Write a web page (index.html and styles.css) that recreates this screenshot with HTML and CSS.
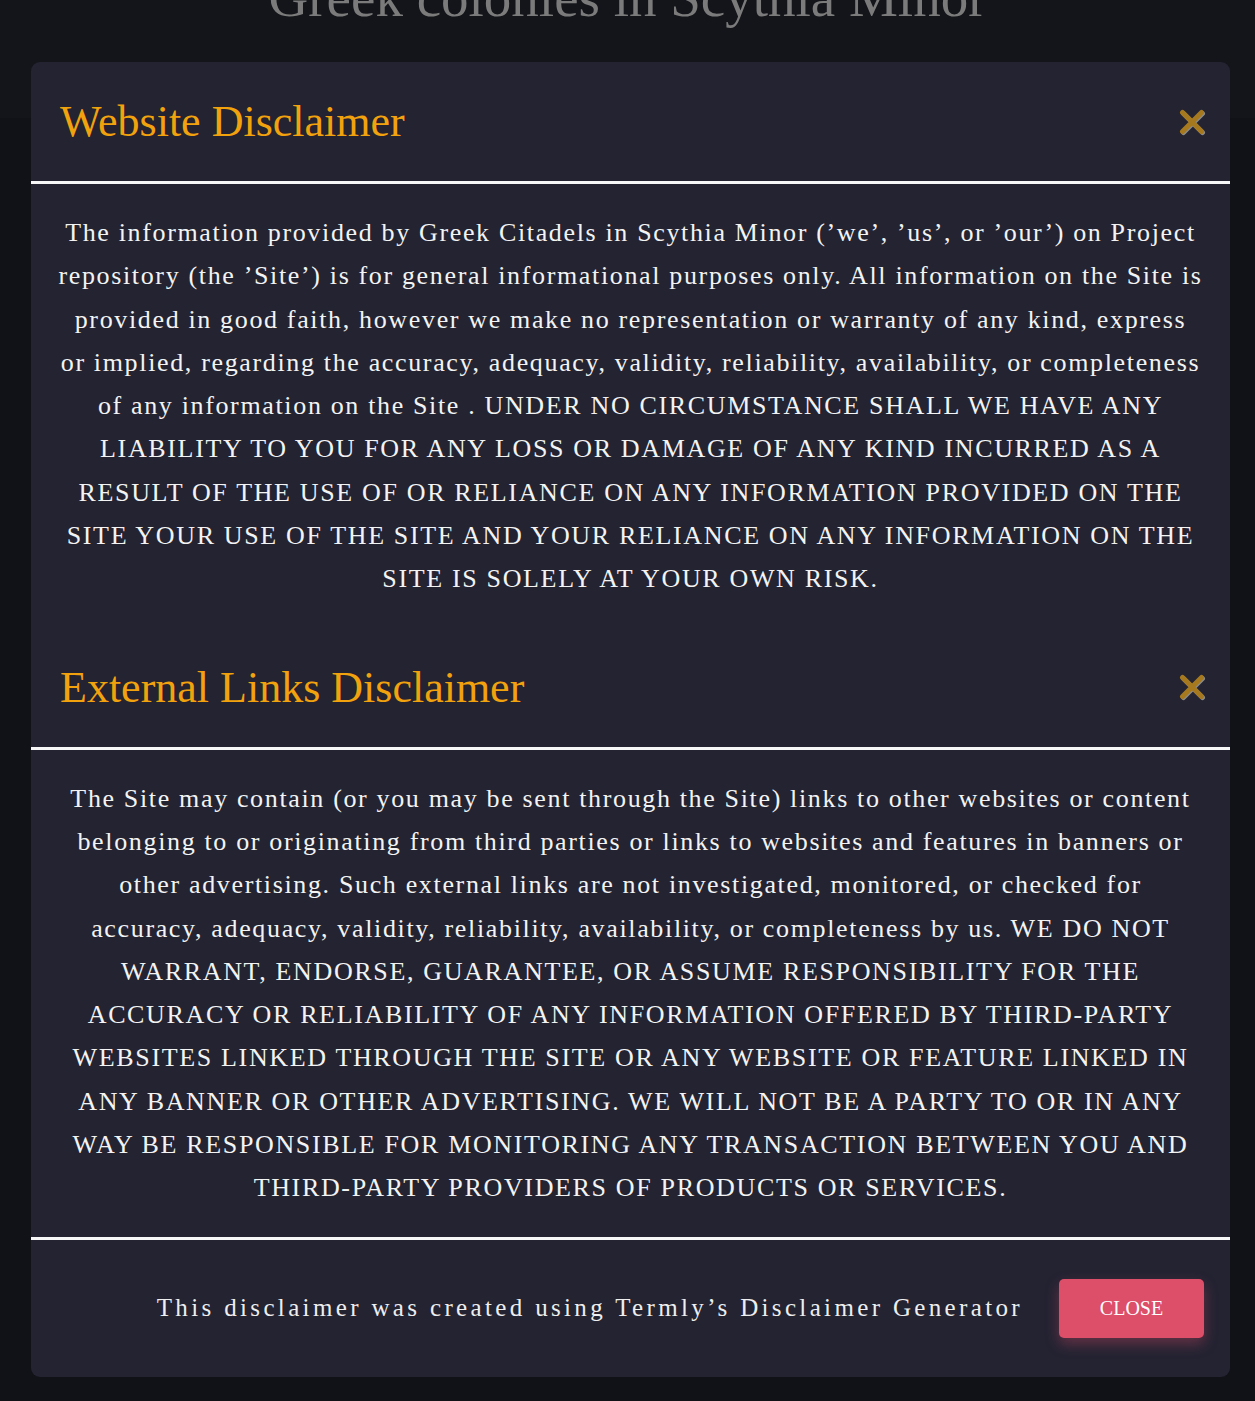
FILE: index.html
```html
<!DOCTYPE html>
<html lang="en">
<head>
<meta charset="utf-8">
<title>Greek colonies in Scythia Minor</title>
<link rel="stylesheet" href="styles.css">
</head>
<body>
<header class="site-header">
  <h1 class="site-title">Greek colonies in Scythia Minor</h1>
</header>
<div class="overlay">
  <div class="modal">
    <div class="modal-head">
      <h2 class="modal-title">Website Disclaimer</h2>
      <button class="x-btn" aria-label="Close">
        <svg width="26" height="26" viewBox="0 0 26 26"><path d="M3.5 3.5 L22.5 22.5 M22.5 3.5 L3.5 22.5" stroke="#a6791f" stroke-width="5" stroke-linecap="round" fill="none"/></svg>
      </button>
    </div>
    <div class="rule"></div>
    <div class="modal-body">
      <p class="disclaimer">The information provided by Greek Citadels in Scythia Minor (’we’, ’us’, or ’our’) on Project<br>
repository (the ’Site’) is for general informational purposes only. All information on the Site is<br>
provided in good faith, however we make no representation or warranty of any kind, express<br>
or implied, regarding the accuracy, adequacy, validity, reliability, availability, or completeness<br>
of any information on the Site . UNDER NO CIRCUMSTANCE SHALL WE HAVE ANY<br>
LIABILITY TO YOU FOR ANY LOSS OR DAMAGE OF ANY KIND INCURRED AS A<br>
RESULT OF THE USE OF OR RELIANCE ON ANY INFORMATION PROVIDED ON THE<br>
SITE YOUR USE OF THE SITE AND YOUR RELIANCE ON ANY INFORMATION ON THE<br>
SITE IS SOLELY AT YOUR OWN RISK.</p>
    </div>
    <div class="modal-head">
      <h2 class="modal-title">External Links Disclaimer</h2>
      <button class="x-btn" aria-label="Close">
        <svg width="26" height="26" viewBox="0 0 26 26"><path d="M3.5 3.5 L22.5 22.5 M22.5 3.5 L3.5 22.5" stroke="#a6791f" stroke-width="5" stroke-linecap="round" fill="none"/></svg>
      </button>
    </div>
    <div class="rule"></div>
    <div class="modal-body">
      <p class="disclaimer">The Site may contain (or you may be sent through the Site) links to other websites or content<br>
belonging to or originating from third parties or links to websites and features in banners or<br>
other advertising. Such external links are not investigated, monitored, or checked for<br>
accuracy, adequacy, validity, reliability, availability, or completeness by us. WE DO NOT<br>
WARRANT, ENDORSE, GUARANTEE, OR ASSUME RESPONSIBILITY FOR THE<br>
ACCURACY OR RELIABILITY OF ANY INFORMATION OFFERED BY THIRD-PARTY<br>
WEBSITES LINKED THROUGH THE SITE OR ANY WEBSITE OR FEATURE LINKED IN<br>
ANY BANNER OR OTHER ADVERTISING. WE WILL NOT BE A PARTY TO OR IN ANY<br>
WAY BE RESPONSIBLE FOR MONITORING ANY TRANSACTION BETWEEN YOU AND<br>
THIRD-PARTY PROVIDERS OF PRODUCTS OR SERVICES.</p>
    </div>
    <div class="rule"></div>
    <div class="modal-foot">
      <p class="credit">This disclaimer was created using Termly’s Disclaimer Generator</p>
      <button class="close-btn">CLOSE</button>
    </div>
  </div>
</div>
</body>
</html>
```
FILE: styles.css
```css
html, body {
  margin: 0;
  padding: 0;
}
body {
  background: #111217;
  min-height: 1401px;
  position: relative;
  font-family: "Liberation Serif", "Times New Roman", serif;
  overflow: hidden;
}
.site-header {
  height: 118px;
  background: #14151a;
  overflow: hidden;
}
.site-title {
  margin: -30px 0 0;
  text-align: center;
  font-weight: normal;
  font-size: 55px;
  line-height: 55px;
  color: #7b7b7b;
}
.overlay {
  position: absolute;
  top: 0;
  left: 0;
  right: 0;
  padding: 62px 0 0 31px;
}
.modal {
  width: 1199px;
  background: #232332;
  border-radius: 9px;
  overflow: hidden;
}
.modal-head {
  height: 119px;
  display: flex;
  align-items: center;
  justify-content: space-between;
  padding: 0 25px 0 29px;
}
.modal-title {
  margin: 0;
  font-weight: normal;
  font-size: 44px;
  color: #f2a20c;
}
.x-btn {
  background: none;
  border: 0;
  padding: 0;
  width: 26px;
  height: 26px;
  display: flex;
  cursor: pointer;
  filter: drop-shadow(1px 1.5px 0 #8c8c8c);
}
.rule {
  height: 3px;
  background: #f7f7f7;
}
.modal-body {
  padding: 27px 8px;
}
.disclaimer {
  margin: 0;
  text-align: center;
  color: #f3f3f3;
  font-size: 26px;
  letter-spacing: 1.65px;
  line-height: 43.3px;
  white-space: nowrap;
}
.modal-foot {
  height: 137px;
  display: flex;
  align-items: center;
  justify-content: flex-end;
  gap: 36px;
  padding: 0 26px;
}
.credit {
  margin: 0;
  color: #eeeeee;
  font-size: 25px;
  letter-spacing: 3.35px;
}
.close-btn {
  width: 145px;
  height: 59px;
  border: 0;
  border-radius: 5px;
  background: #dd4e69;
  color: #ffffff;
  font-family: "Liberation Serif", "Times New Roman", serif;
  font-size: 20px;
  box-shadow: 0 6px 14px rgba(221, 78, 105, 0.35);
  cursor: pointer;
}
```
